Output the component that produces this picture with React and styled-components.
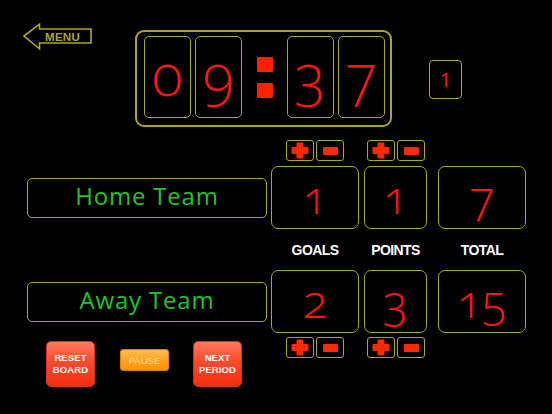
import React from "react";
import styled, { createGlobalStyle } from "styled-components";

const olive = "#aca42c";
const red = "#ff1616";
const iconRed = "#ff2a00";

const Global = createGlobalStyle`
  html, body { margin: 0; padding: 0; background: #000; }
  * { box-sizing: border-box; }
`;

const Screen = styled.div`
  width: 552px;
  height: 414px;
  background: #000;
  overflow: hidden;
  font-family: "Open Sans", "Liberation Sans", sans-serif;
`;

const TopBar = styled.div`
  display: flex;
  align-items: flex-start;
  padding: 23px 0 0 23px;
  height: 127px;
`;

const MenuButton = styled.button`
  position: relative;
  width: 70px;
  height: 28px;
  padding: 0;
  border: none;
  background: transparent;
  cursor: pointer;
  svg { position: absolute; left: 0; top: 0; }
`;

const MenuLabel = styled.span`
  position: absolute;
  left: 22px;
  top: 6.5px;
  font-family: "Liberation Sans", Arial, sans-serif;
  font-weight: 700;
  font-size: 11.5px;
  letter-spacing: 0.3px;
  color: ${olive};
  line-height: 14px;
`;

const Clock = styled.div`
  margin-left: 42px;
  margin-top: 7px;
  width: 257px;
  height: 97px;
  border: 2px solid ${olive};
  border-radius: 9px;
  display: flex;
  gap: 4px;
  padding: 4px 5px 0 7px;
`;

const DigitBox = styled.div`
  width: 47px;
  height: 82px;
  border: 1.5px solid ${olive};
  border-radius: 5px;
  display: flex;
  align-items: center;
  justify-content: center;
  color: ${red};
  font-family: "Open Sans", sans-serif;
  font-weight: 350;
  font-size: 58px;
  font-variant-numeric: oldstyle-nums;
  line-height: 1;
  padding-bottom: 6px;
`;

const Colon = styled.div`
  width: 37px;
  height: 82px;
  display: flex;
  flex-direction: column;
  align-items: center;
  justify-content: center;
  gap: 11px;
`;

const ColonDot = styled.span`
  width: 16px;
  height: 15px;
  background: #ff2200;
  border-radius: 1px;
`;

const PeriodBox = styled.div`
  margin-left: 37px;
  margin-top: 37px;
  width: 33px;
  height: 39px;
  border: 1.5px solid ${olive};
  border-radius: 4px;
  display: flex;
  align-items: center;
  justify-content: center;
  color: ${red};
  font-family: "Open Sans", sans-serif;
  font-size: 20px;
  font-weight: 400;
`;

const Board = styled.div`
  display: grid;
  grid-template-columns: 244px 93px 74px 88px;
  grid-template-rows: 26px 63px 41px 63px auto;
  padding-left: 27px;
  margin-top: 13px;
`;

const StepGroup = styled.div`
  grid-column: ${(p) => p.$col};
  grid-row: ${(p) => p.$row};
  align-self: start;
  display: flex;
  gap: 2px;
  margin-left: ${(p) => p.$offset}px;
  margin-top: ${(p) => p.$top || 0}px;
`;

const StepButton = styled.button`
  width: 28px;
  height: 21px;
  padding: 0;
  border: 1.2px solid ${olive};
  border-radius: 3px;
  background: #000;
  display: flex;
  align-items: center;
  justify-content: center;
  cursor: pointer;
`;

const TeamBox = styled.div`
  grid-column: 1;
  grid-row: ${(p) => p.$row};
  align-self: center;
  width: 240px;
  height: 40px;
  border: 1.5px solid ${olive};
  border-radius: 5px;
  display: flex;
  align-items: center;
  justify-content: center;
  color: #22c42a;
  font-family: "Open Sans", sans-serif;
  font-size: 24px;
  letter-spacing: 0.8px;
  padding-bottom: 5px;
`;

const ScoreBox = styled.div`
  grid-column: ${(p) => p.$col};
  grid-row: ${(p) => p.$row};
  width: ${(p) => p.$w}px;
  height: 63px;
  border: 1.5px solid ${olive};
  border-radius: 7px;
  display: flex;
  align-items: center;
  justify-content: center;
  color: ${red};
  font-family: "Open Sans", sans-serif;
  font-weight: 350;
  font-size: 46px;
  font-variant-numeric: oldstyle-nums;
  line-height: 1;
  padding-bottom: 4px;
`;

const ColLabel = styled.div`
  grid-column: ${(p) => p.$col};
  grid-row: 3;
  width: ${(p) => p.$w}px;
  align-self: center;
  text-align: center;
  color: #fff;
  font-family: "Liberation Sans", Arial, sans-serif;
  font-weight: 700;
  font-size: 14px;
  letter-spacing: -0.6px;
`;

const ActionRow = styled.div`
  grid-column: 1;
  grid-row: 5;
  display: flex;
  align-items: flex-start;
  gap: 25px;
  padding-left: 19px;
  margin-top: 8px;
`;

const ActionButton = styled.button`
  width: 49px;
  height: 46px;
  padding: 0;
  border: 1px solid #d23414;
  border-radius: 5px;
  background: linear-gradient(#ff7a5c 0%, #ff4a2c 45%, #f52e10 100%);
  color: #fff;
  font-family: "Liberation Sans", Arial, sans-serif;
  font-weight: 700;
  font-size: 9.5px;
  line-height: 12px;
  letter-spacing: 0.1px;
  cursor: pointer;
`;

const PauseButton = styled.button`
  width: 49px;
  height: 22px;
  margin-top: 8px;
  margin-right: -1px;
  padding: 0;
  border: 1px solid #e08000;
  border-radius: 3px;
  background: linear-gradient(#ffbe4a 0%, #ffa020 55%, #ff9200 100%);
  color: #ffd98e;
  font-family: "Liberation Sans", Arial, sans-serif;
  font-size: 9.5px;
  cursor: pointer;
`;

const PlusIcon = () => (
  <svg width="18" height="17" viewBox="0 0 18 17">
    <path
      d="M6.5 0.5h5a1 1 0 0 1 1 1V5h4a1 1 0 0 1 1 1v5a1 1 0 0 1-1 1h-4v3.5a1 1 0 0 1-1 1h-5a1 1 0 0 1-1-1V12h-4a1 1 0 0 1-1-1V6a1 1 0 0 1 1-1h4V1.5a1 1 0 0 1 1-1z"
      fill={iconRed}
    />
  </svg>
);

const MinusIcon = () => (
  <svg width="15" height="8" viewBox="0 0 15 8">
    <rect x="0" y="0" width="15" height="8" rx="1" fill={iconRed} />
  </svg>
);

const Steps = ({ col, row, offset, top }) => (
  <StepGroup $col={col} $row={row} $offset={offset} $top={top}>
    <StepButton aria-label="plus">
      <PlusIcon />
    </StepButton>
    <StepButton aria-label="minus">
      <MinusIcon />
    </StepButton>
  </StepGroup>
);

export default function App() {
  return (
    <Screen>
      <Global />
      <TopBar>
        <MenuButton>
          <svg width="70" height="28" viewBox="0 0 70 28">
            <path
              d="M1 13 L16.5 1.2 V6 H68 V20 H16.5 V25.8 Z"
              fill="none"
              stroke={olive}
              strokeWidth="1.6"
              strokeLinejoin="miter"
            />
          </svg>
          <MenuLabel>MENU</MenuLabel>
        </MenuButton>
        <Clock>
          <DigitBox>0</DigitBox>
          <DigitBox>9</DigitBox>
          <Colon>
            <ColonDot />
            <ColonDot />
          </Colon>
          <DigitBox>3</DigitBox>
          <DigitBox>7</DigitBox>
        </Clock>
        <PeriodBox>1</PeriodBox>
      </TopBar>
      <Board>
        <Steps col={2} row={1} offset={15} />
        <Steps col={3} row={1} offset={3} />

        <TeamBox $row={2}>Home Team</TeamBox>
        <ScoreBox $col={2} $row={2} $w={88}>1</ScoreBox>
        <ScoreBox $col={3} $row={2} $w={63}>1</ScoreBox>
        <ScoreBox $col={4} $row={2} $w={88}>7</ScoreBox>

        <ColLabel $col={2} $w={88}>GOALS</ColLabel>
        <ColLabel $col={3} $w={63}>POINTS</ColLabel>
        <ColLabel $col={4} $w={88}>TOTAL</ColLabel>

        <TeamBox $row={4}>Away Team</TeamBox>
        <ScoreBox $col={2} $row={4} $w={88}>2</ScoreBox>
        <ScoreBox $col={3} $row={4} $w={63}>3</ScoreBox>
        <ScoreBox $col={4} $row={4} $w={88}>15</ScoreBox>

        <ActionRow>
          <ActionButton>
            RESET
            <br />
            BOARD
          </ActionButton>
          <PauseButton>PAUSE</PauseButton>
          <ActionButton>
            NEXT
            <br />
            PERIOD
          </ActionButton>
        </ActionRow>
        <Steps col={2} row={5} offset={15} top={4} />
        <Steps col={3} row={5} offset={3} top={4} />
      </Board>
    </Screen>
  );
}
